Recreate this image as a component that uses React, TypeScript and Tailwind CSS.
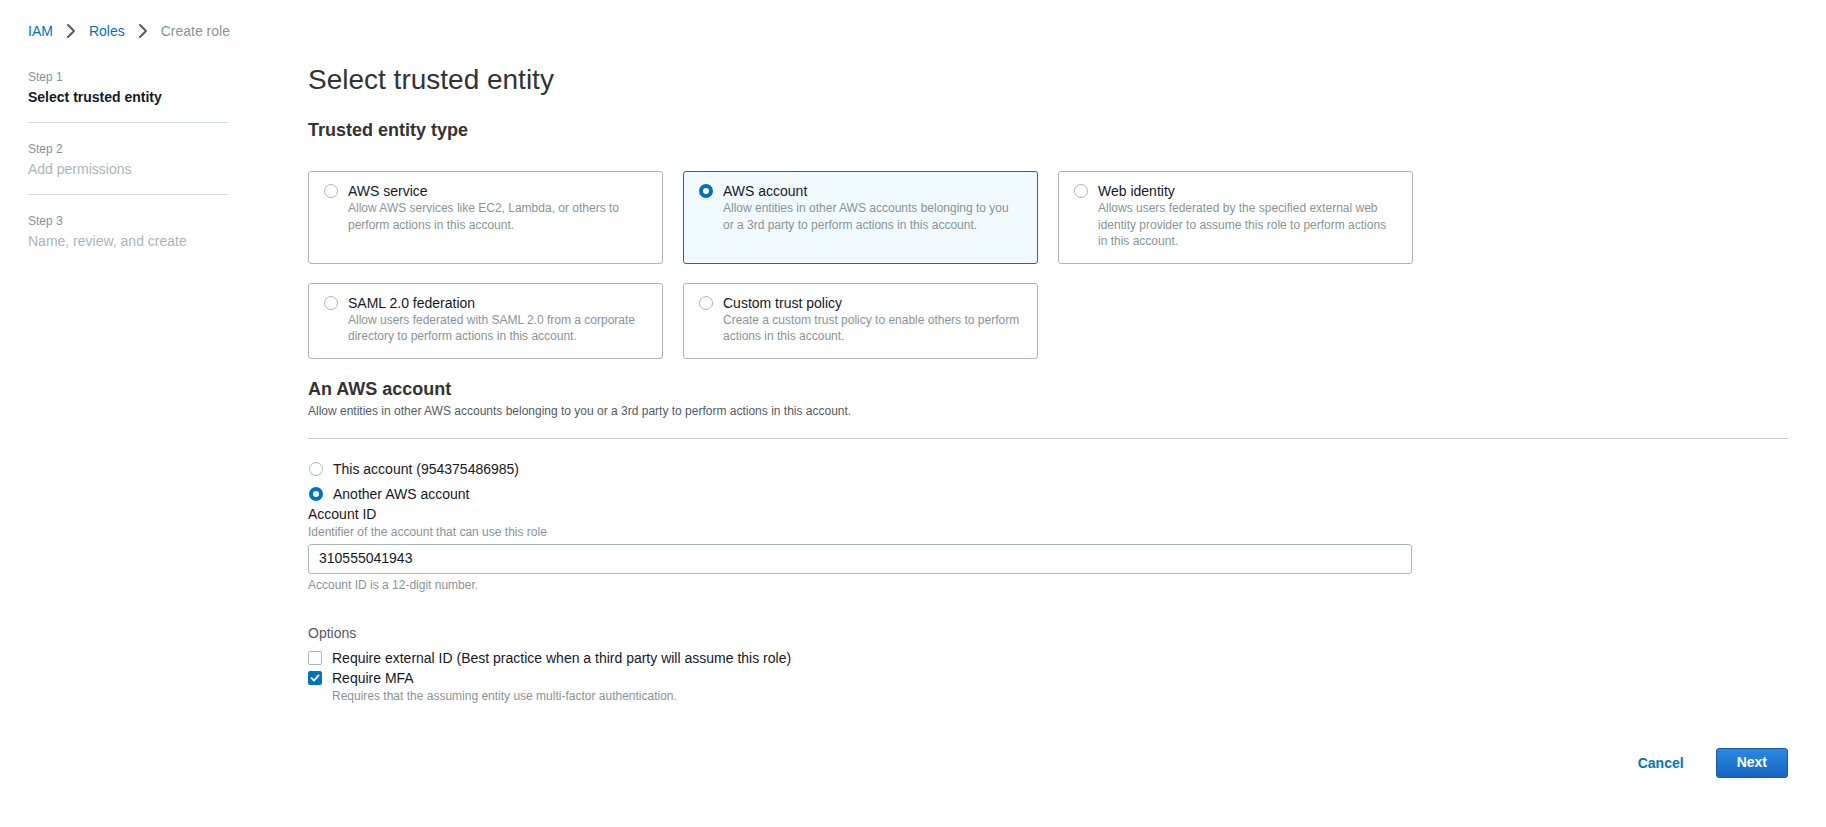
import React from "react";

type EntityOption = {
  title: string;
  desc: string;
  selected?: boolean;
};

const entityTypes: EntityOption[] = [
  {
    title: "AWS service",
    desc: "Allow AWS services like EC2, Lambda, or others to perform actions in this account.",
  },
  {
    title: "AWS account",
    desc: "Allow entities in other AWS accounts belonging to you or a 3rd party to perform actions in this account.",
    selected: true,
  },
  {
    title: "Web identity",
    desc: "Allows users federated by the specified external web identity provider to assume this role to perform actions in this account.",
  },
  {
    title: "SAML 2.0 federation",
    desc: "Allow users federated with SAML 2.0 from a corporate directory to perform actions in this account.",
  },
  {
    title: "Custom trust policy",
    desc: "Create a custom trust policy to enable others to perform actions in this account.",
  },
];

function Radio({ checked }: { checked?: boolean }) {
  return checked ? (
    <span className="block h-[14px] w-[14px] shrink-0 rounded-full border-[4px] border-[#0073bb] bg-white" />
  ) : (
    <span className="block h-[14px] w-[14px] shrink-0 rounded-full border border-[#aab7b8] bg-white" />
  );
}

function Checkbox({ checked }: { checked?: boolean }) {
  return checked ? (
    <span className="flex h-[14px] w-[14px] shrink-0 items-center justify-center rounded-[2px] bg-[#0073bb]">
      <svg width="10" height="10" viewBox="0 0 10 10" fill="none">
        <path d="M1.5 5.2 L4 7.6 L8.6 2.4" stroke="white" strokeWidth="1.8" strokeLinecap="round" strokeLinejoin="round" />
      </svg>
    </span>
  ) : (
    <span className="block h-[14px] w-[14px] shrink-0 rounded-[2px] border border-[#aab7b8] bg-white" />
  );
}

function Chevron() {
  return (
    <svg width="10" height="16" viewBox="0 0 10 16" fill="none">
      <path d="M2 2 L8 8 L2 14" stroke="#545b64" strokeWidth="2" strokeLinecap="round" strokeLinejoin="round" />
    </svg>
  );
}

function StepItem({ step, title, active, last }: { step: string; title: string; active?: boolean; last?: boolean }) {
  return (
    <div className={last ? "pt-[18px]" : active ? "pb-[15px] border-b border-[#d5dbdb]" : "pt-[18px] pb-[15px] border-b border-[#d5dbdb]"}>
      <div className="text-[12px] leading-[16px] text-[#879596]">{step}</div>
      <div
        className={
          active
            ? "mt-[2px] text-[14px] leading-[20px] font-bold text-[#16191f]"
            : "mt-[2px] text-[14px] leading-[20px] text-[#aab7b8]"
        }
      >
        {title}
      </div>
    </div>
  );
}

function EntityCard({ item }: { item: EntityOption }) {
  return (
    <div
      className={
        item.selected
          ? "flex gap-[10px] rounded-[3px] border border-[#0073bb] bg-[#f1faff] pl-[15px] pr-[16px] pt-[10px] pb-[13px]"
          : "flex gap-[10px] rounded-[3px] border border-[#aab7b8] bg-white pl-[15px] pr-[16px] pt-[10px] pb-[13px]"
      }
    >
      <div className="flex h-[18px] items-center">
        <Radio checked={item.selected} />
      </div>
      <div className="min-w-0">
        <div className="text-[14px] leading-[18px] text-[#16191f]">{item.title}</div>
        <div className="text-[12px] leading-[16.5px] text-[#879596]">{item.desc}</div>
      </div>
    </div>
  );
}

export default function App() {
  return (
    <div className="min-h-[827px] w-full bg-white font-['Liberation_Sans',Arial,sans-serif] text-[#16191f]">
      <div className="px-[28px] pt-[21px]">
        {/* Breadcrumbs */}
        <nav className="flex h-[20px] items-center gap-[13px] text-[14px] leading-[20px]">
          <span className="text-[#0073bb]">IAM</span>
          <Chevron />
          <span className="text-[#0073bb]">Roles</span>
          <Chevron />
          <span className="text-[#879596]">Create role</span>
        </nav>

        <div className="flex">
          {/* Wizard steps */}
          <aside className="w-[200px] shrink-0 pt-[28px]">
            <StepItem step="Step 1" title="Select trusted entity" active />
            <StepItem step="Step 2" title="Add permissions" />
            <StepItem step="Step 3" title="Name, review, and create" last />
          </aside>

          {/* Main form */}
          <main className="ml-[80px] flex-1 pt-[21px] pr-[10px]">
            <h1 className="text-[28px] leading-[36px] text-[#333333]">Select trusted entity</h1>
            <h2 className="mt-[20px] text-[18px] leading-[24px] font-bold text-[#333333]">Trusted entity type</h2>

            <div className="mt-[29px] grid w-[1105px] grid-cols-3 gap-x-[20px] gap-y-[19px]">
              {entityTypes.map((t) => (
                <EntityCard key={t.title} item={t} />
              ))}
            </div>

            <h2 className="mt-[18px] text-[18px] leading-[24px] font-bold text-[#333333]">An AWS account</h2>
            <p className="mt-[2px] text-[12px] leading-[16px] text-[#545b64]">
              Allow entities in other AWS accounts belonging to you or a 3rd party to perform actions in this account.
            </p>

            <div className="mt-[19px] border-t border-[#cccccc]" />

            <div className="mt-[20px] flex flex-col gap-[5px]">
              <label className="flex items-center gap-[10px] text-[14px] leading-[20px] text-[#16191f]">
                <span className="ml-[1px]">
                  <Radio />
                </span>
                This account (954375486985)
              </label>
              <label className="flex items-center gap-[10px] text-[14px] leading-[20px] text-[#16191f]">
                <span className="ml-[1px]">
                  <Radio checked />
                </span>
                Another AWS account
              </label>
            </div>

            <div className="mt-[1px] text-[14px] leading-[18px] text-[#16191f]">Account ID</div>
            <div className="mt-[1px] text-[12px] leading-[16px] text-[#879596]">
              Identifier of the account that can use this role
            </div>
            <div className="mt-[4px] flex h-[30px] w-[1104px] items-center rounded-[3px] border border-[#aab7b8] px-[10px] text-[14px] text-[#16191f]">
              310555041943
            </div>
            <div className="mt-[3px] text-[12px] leading-[16px] text-[#879596]">Account ID is a 12-digit number.</div>

            <div className="mt-[30px] text-[14px] leading-[20px] text-[#545b64]">Options</div>
            <div className="mt-[5px] flex flex-col">
              <label className="flex items-center gap-[10px] text-[14px] leading-[20px] text-[#16191f]">
                <Checkbox />
                Require external ID (Best practice when a third party will assume this role)
              </label>
              <label className="flex items-center gap-[10px] text-[14px] leading-[20px] text-[#16191f]">
                <Checkbox checked />
                Require MFA
              </label>
              <div className="ml-[24px] text-[12px] leading-[16px] text-[#879596]">
                Requires that the assuming entity use multi-factor authentication.
              </div>
            </div>

            {/* Wizard actions */}
            <div className="mt-[44px] flex items-center justify-end gap-[12px]">
              <button className="px-[20px] text-[14px] leading-[20px] font-bold text-[#0073bb]">Cancel</button>
              <button className="h-[30px] rounded-[3px] border border-[#1a5a9e] bg-gradient-to-b from-[#2b88e3] to-[#1666bf] px-[20px] text-[14px] font-bold text-white">
                Next
              </button>
            </div>
          </main>
        </div>
      </div>
    </div>
  );
}
